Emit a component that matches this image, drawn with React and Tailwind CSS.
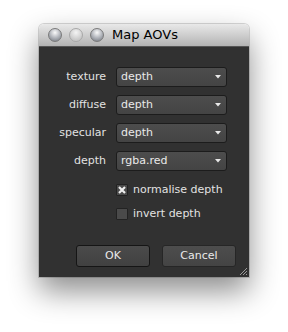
import React from 'react';

const font = { fontFamily: '"DejaVu Sans", sans-serif' };

function Light({ dim }) {
  return (
    <div
      className={`w-[14px] h-[14px] rounded-full border ${
        dim
          ? 'bg-[radial-gradient(circle_at_50%_30%,#f4f4f4,#c9c9c9_70%)] border-[#a8a8a8]'
          : 'bg-[radial-gradient(circle_at_50%_30%,#fafafa_0%,#b9bcc2_45%,#6f747c_100%)] border-[#7a7a7a]'
      }`}
    />
  );
}

function Combo({ label, value }) {
  return (
    <div className="flex items-center h-[20px]">
      <div className="w-[67px] text-right text-[11px] text-[#e2e2e2]">{label}</div>
      <div className="ml-[10px] w-[111px] h-[20px] rounded-[3px] border border-[#1c1c1c] bg-[linear-gradient(#4d4d4d,#444444)] flex items-center pl-[4px] pr-[5px]">
        <span className="flex-1 text-[11px] text-[#eaeaea]">{value}</span>
        <svg width="6" height="4" viewBox="0 0 6 4">
          <path d="M0 0h6L3 3.5z" fill="#e8e8e8" />
        </svg>
      </div>
    </div>
  );
}

function Check({ label, checked }) {
  return (
    <div className="flex items-center h-[14px] pl-[77px]">
      <div className="w-[12px] h-[12px] rounded-[1px] border border-[#222] bg-[#4a4a4a] flex items-center justify-center">
        {checked && (
          <svg width="10" height="10" viewBox="0 0 10 10">
            <path d="M2 2l6 6M8 2l-6 6" stroke="#eeeeee" strokeWidth="2.2" />
          </svg>
        )}
      </div>
      <span className="ml-[5px] text-[11px] text-[#e2e2e2]">{label}</span>
    </div>
  );
}

export default function App() {
  return (
    <div className="w-[288px] h-[332px] bg-white pl-[39px] pt-[24px]" style={font}>
      <div className="w-[210px] h-[253px] flex flex-col rounded-t-[5px] shadow-[0_14px_30px_rgba(0,0,0,0.45),0_0_0_1px_rgba(0,0,0,0.15)]">
        {/* title bar */}
        <div className="h-[23px] flex items-center rounded-t-[5px] bg-[linear-gradient(#e9e9e9,#b3b3b3)] border-b border-[#555] px-[9px] gap-[7px]">
          <Light />
          <Light dim />
          <Light />
          <span className="ml-[1px] text-[13px] text-black">Map AOVs</span>
        </div>

        {/* body */}
        <div className="relative flex-1 bg-[#313131] flex flex-col pt-[20px]">
          <div className="flex flex-col gap-[8px]">
            <Combo label="texture" value="depth" />
            <Combo label="diffuse" value="depth" />
            <Combo label="specular" value="depth" />
            <Combo label="depth" value="rgba.red" />
          </div>
          <div className="flex flex-col gap-[10px] mt-[12px]">
            <Check label="normalise depth" checked />
            <Check label="invert depth" />
          </div>
          <div className="flex justify-end gap-[12px] pr-[13px] mt-[24px]">
            <button className="w-[74px] h-[22px] rounded-[3px] border border-[#151515] bg-[linear-gradient(#4b4b4b,#414141)] text-[11px] text-[#eaeaea]">
              OK
            </button>
            <button className="w-[74px] h-[22px] rounded-[3px] border border-[#262626] bg-[linear-gradient(#4d4d4d,#444444)] text-[11px] text-[#eaeaea]">
              Cancel
            </button>
          </div>
          <svg className="absolute right-[1px] bottom-[1px]" width="10" height="10" viewBox="0 0 10 10">
            <path d="M9 2L2 9M9 5L5 9M9 8L8 9" stroke="#9a9a9a" strokeWidth="1" />
          </svg>
        </div>
      </div>
    </div>
  );
}
